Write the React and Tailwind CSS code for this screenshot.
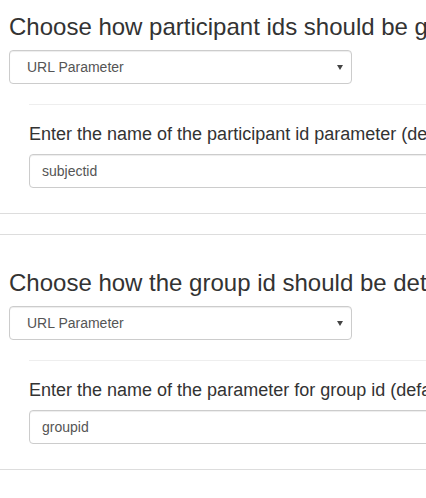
const sections = [
    {
        title: 'Choose how participant ids should be generated for this experiment',
        label: 'Enter the name of the participant id parameter (default is subjectid)',
        value: 'subjectid',
    },
    {
        title: 'Choose how the group id should be determined for this experiment',
        label: 'Enter the name of the parameter for group id (default is groupid)',
        value: 'groupid',
    },
];

const FakeSelect = ({ value }) => (
    <div className="relative flex items-center w-[343px] h-[34px] border border-[#ccc] rounded-[4px] bg-white shadow-[inset_0_1px_1px_rgba(0,0,0,0.075)] pl-[17px] text-[14px] text-[#555]">
        <span>{value}</span>
        <svg className="absolute right-[8px] top-[14px]" width="6" height="5" viewBox="0 0 6 5">
            <polygon points="0,0 6,0 3,5" fill="#444" />
        </svg>
    </div>
);

const Section = ({ title, label, value, first }) => (
    <section className={`border-y border-[#ddd] pt-[35px] pb-[25px] ${first ? '' : 'mt-[20px]'}`}>
        <div className="pl-[9px]">
            <h3 className="text-[24px] leading-[26px] text-[#333] whitespace-nowrap mb-[10px]">{title}</h3>
            <FakeSelect value="URL Parameter" />
            <div className="ml-[20px]">
                <hr className="mt-[20px] border-t border-[#eee]" />
                <h4 className="mt-[19px] mb-[10px] text-[18px] leading-[20px] text-[#333] whitespace-nowrap">{label}</h4>
                <div className="flex items-center h-[34px] w-[600px] border border-[#ccc] rounded-[4px] shadow-[inset_0_1px_1px_rgba(0,0,0,0.075)] px-[12px] text-[14px] text-[#555]">
                    {value}
                </div>
            </div>
        </div>
    </section>
);

export default function App() {
    return (
        <div className="w-[426px] h-[498px] overflow-hidden bg-white font-['Liberation_Sans',Arial,sans-serif]">
            <div className="w-[800px] -mt-[22px]">
                {sections.map((s, i) => (
                    <Section key={i} {...s} first={i === 0} />
                ))}
            </div>
        </div>
    );
}
